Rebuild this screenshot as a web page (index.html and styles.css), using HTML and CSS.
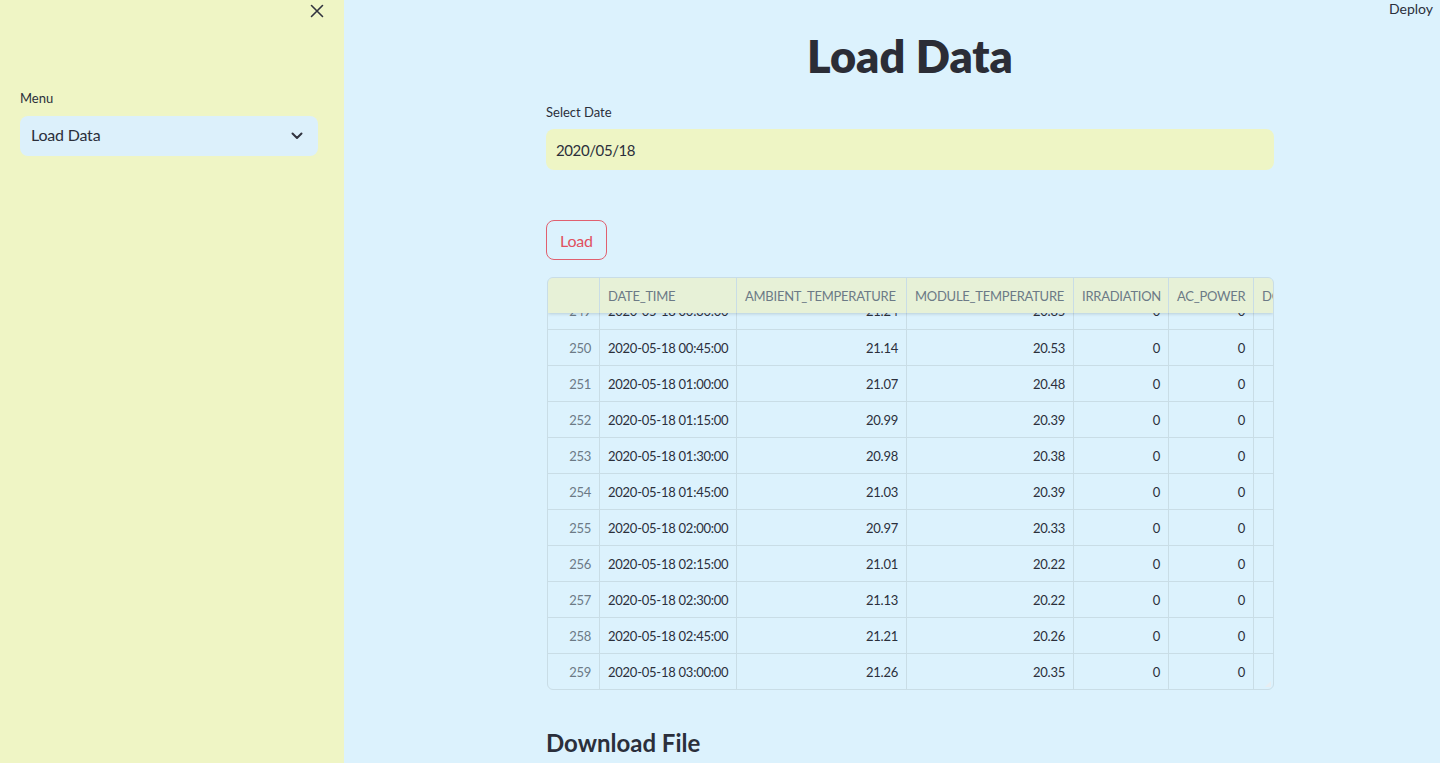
FILE: index.html
```html
<!DOCTYPE html>
<html>
<head>
<meta charset="utf-8">
<link rel="stylesheet" href="styles.css">
</head>
<body>
<div class="app">
  <aside class="sidebar">
    <div class="sidebar-top">
      <svg class="close" width="14" height="14" viewBox="0 0 14 14"><path d="M1.5 1.5 L12.5 12.5 M12.5 1.5 L1.5 12.5" stroke="#31333f" stroke-width="1.6" fill="none" stroke-linecap="round"/></svg>
    </div>
    <div class="field-label side-label">Menu</div>
    <div class="select">
      <span>Load Data</span>
      <svg width="12" height="8" viewBox="0 0 12 8"><path d="M1.5 1.5 L6 6 L10.5 1.5" stroke="#31333f" stroke-width="2" fill="none" stroke-linecap="round" stroke-linejoin="round"/></svg>
    </div>
  </aside>
  <main class="main">
    <div class="header"><span class="deploy">Deploy</span></div>
    <div class="content">
      <h1 class="title">Load Data</h1>
      <div class="field-label">Select Date</div>
      <div class="date-input">2020/05/18</div>
      <button class="btn">Load</button>
      <div class="table-wrap">
        <div class="row head">
          <div class="c idx"></div>
          <div class="c dt">DATE_TIME</div>
          <div class="c amb">AMBIENT_TEMPERATURE</div>
          <div class="c mod">MODULE_TEMPERATURE</div>
          <div class="c irr">IRRADIATION</div>
          <div class="c ac">AC_POWER</div>
          <div class="c dc">DC_POWER</div>
        </div>
        <div class="body">
          <div class="row partial"><div class="c idx">249</div><div class="c dt">2020-05-18 00:30:00</div><div class="c amb num">21.24</div><div class="c mod num">20.85</div><div class="c irr num">0</div><div class="c ac num">0</div><div class="c dc num"></div></div>
          <div class="row"><div class="c idx">250</div><div class="c dt">2020-05-18 00:45:00</div><div class="c amb num">21.14</div><div class="c mod num">20.53</div><div class="c irr num">0</div><div class="c ac num">0</div><div class="c dc num"></div></div>
          <div class="row"><div class="c idx">251</div><div class="c dt">2020-05-18 01:00:00</div><div class="c amb num">21.07</div><div class="c mod num">20.48</div><div class="c irr num">0</div><div class="c ac num">0</div><div class="c dc num"></div></div>
          <div class="row"><div class="c idx">252</div><div class="c dt">2020-05-18 01:15:00</div><div class="c amb num">20.99</div><div class="c mod num">20.39</div><div class="c irr num">0</div><div class="c ac num">0</div><div class="c dc num"></div></div>
          <div class="row"><div class="c idx">253</div><div class="c dt">2020-05-18 01:30:00</div><div class="c amb num">20.98</div><div class="c mod num">20.38</div><div class="c irr num">0</div><div class="c ac num">0</div><div class="c dc num"></div></div>
          <div class="row"><div class="c idx">254</div><div class="c dt">2020-05-18 01:45:00</div><div class="c amb num">21.03</div><div class="c mod num">20.39</div><div class="c irr num">0</div><div class="c ac num">0</div><div class="c dc num"></div></div>
          <div class="row"><div class="c idx">255</div><div class="c dt">2020-05-18 02:00:00</div><div class="c amb num">20.97</div><div class="c mod num">20.33</div><div class="c irr num">0</div><div class="c ac num">0</div><div class="c dc num"></div></div>
          <div class="row"><div class="c idx">256</div><div class="c dt">2020-05-18 02:15:00</div><div class="c amb num">21.01</div><div class="c mod num">20.22</div><div class="c irr num">0</div><div class="c ac num">0</div><div class="c dc num"></div></div>
          <div class="row"><div class="c idx">257</div><div class="c dt">2020-05-18 02:30:00</div><div class="c amb num">21.13</div><div class="c mod num">20.22</div><div class="c irr num">0</div><div class="c ac num">0</div><div class="c dc num"></div></div>
          <div class="row"><div class="c idx">258</div><div class="c dt">2020-05-18 02:45:00</div><div class="c amb num">21.21</div><div class="c mod num">20.26</div><div class="c irr num">0</div><div class="c ac num">0</div><div class="c dc num"></div></div>
          <div class="row last"><div class="c idx">259</div><div class="c dt">2020-05-18 03:00:00</div><div class="c amb num">21.26</div><div class="c mod num">20.35</div><div class="c irr num">0</div><div class="c ac num">0</div><div class="c dc num"></div></div>
        </div>
        <span class="resize"></span>
      </div>
      <h2 class="subtitle">Download File</h2>
    </div>
  </main>
</div>
</body>
</html>
```
FILE: styles.css
```css
* { box-sizing: border-box; }
html, body { margin: 0; padding: 0; height: 100%; overflow: hidden; }
body {
  font-family: "Source Sans Pro", Lato, "Noto Sans", sans-serif;
  color: #2b2f3b;
  background: #dcf2fd;
}
.app { display: flex; height: 763px; }
.sidebar {
  width: 344px;
  flex: none;
  background: #eff5c5;
  padding: 0 26px 0 20px;
}
.sidebar-top { display: flex; justify-content: flex-end; padding-top: 4px; margin-right: -6px; height: 20px; }
.close { display: block; }
.field-label { font-size: 13px; line-height: 20px; color: #2b2f3b; }
.side-label { margin-top: 68px; }
.select {
  margin-top: 8px;
  height: 40px;
  width: 298px;
  background: #dcf0fb;
  border-radius: 8px;
  display: flex;
  align-items: center;
  justify-content: space-between;
  padding: 0 15px 3px 11px;
  font-size: 16px;
  letter-spacing: -0.2px;
}
.select svg { margin-top: 2px; }
.main {
  flex: 1;
  display: flex;
  justify-content: center;
  padding-left: 36px;
  position: relative;
}
.header { position: absolute; top: -2px; right: 7px; height: 20px; }
.deploy { font-size: 14px; line-height: 20px; color: #2b2f3b; }
.content { width: 728px; }
.title {
  margin: 24px 0 0;
  text-align: center;
  font-size: 45px;
  line-height: 64px;
  font-weight: 800;
  color: #2b2d36;
}
.content > .field-label { margin-top: 14px; }
.date-input {
  margin-top: 7px;
  height: 41px;
  background: #eef5c5;
  border-radius: 8px;
  padding: 0 10px;
  display: flex;
  align-items: center;
  font-size: 15px;
  letter-spacing: -0.4px;
}
.btn {
  margin-top: 50px;
  display: block;
  height: 40px;
  padding: 0 13px;
  background: transparent;
  border: 1px solid #e0606f;
  border-radius: 8px;
  color: #e0505f;
  font-family: inherit;
  font-size: 16px;
  letter-spacing: -0.2px;
}
.table-wrap {
  margin-top: 17px;
  margin-left: 1px;
  width: 727px;
  border: 1px solid #c9dde6;
  border-radius: 6px;
  overflow: hidden;
  position: relative;
  font-size: 13px;
  letter-spacing: -0.25px;
}
.row { display: flex; height: 36px; border-bottom: 1px solid #c9dde6; white-space: nowrap; }
.row.last { border-bottom: none; height: 35px; }
.row.head {
  height: 35px;
  background: #e7f1d7;
  color: #6c7a86;
  border-bottom: none;
  box-shadow: 0 1px 3px rgba(80, 100, 110, 0.25);
  position: relative;
  z-index: 1;
}
.body { overflow: hidden; }
.row.partial { height: 17px; align-items: flex-end; overflow: hidden; }
.row.partial .c { height: 36px; flex-shrink: 0; }
.c {
  flex: none;
  display: flex;
  align-items: center;
  padding: 0 8px;
  border-right: 1px solid #c9dde6;
  overflow: hidden;
}
.idx { width: 52px; justify-content: flex-end; color: #6c7a86; }
.dt { width: 137px; }
.amb { width: 170px; }
.mod { width: 167px; }
.irr { width: 95px; }
.ac { width: 85px; }
.dc { width: 80px; border-right: none; }
.num { justify-content: flex-end; }
.resize {
  position: absolute;
  right: 2px;
  bottom: 2px;
  width: 0; height: 0;
  border-left: 6px solid transparent;
  border-bottom: 6px solid #e8eef2;
}
.subtitle {
  margin: 35px 0 0;
  font-size: 24px;
  font-weight: 700;
  line-height: 36px;
  color: #2b2f3b;
}
```
